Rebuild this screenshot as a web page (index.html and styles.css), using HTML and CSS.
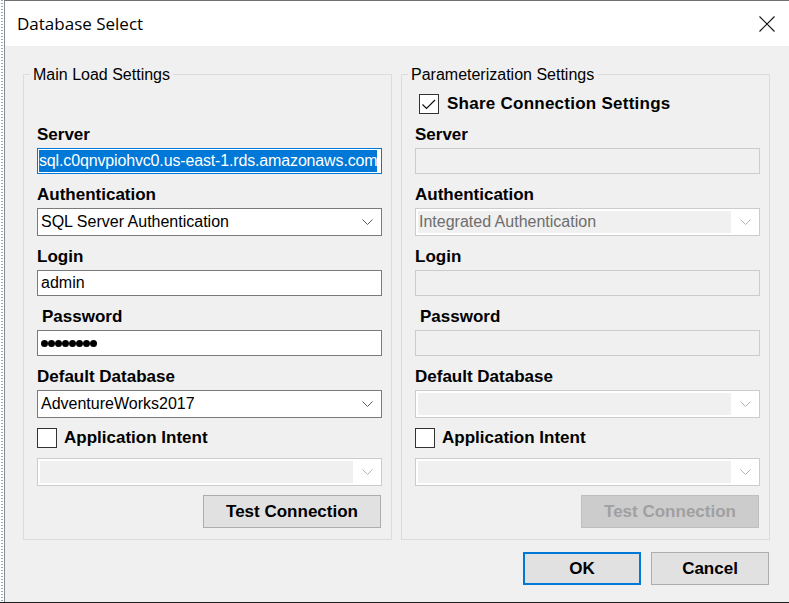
FILE: index.html
```html
<!DOCTYPE html>
<html>
<head>
<meta charset="utf-8">
<title>Database Select</title>
<link rel="stylesheet" href="styles.css">
</head>
<body>
<div class="screen">
  <div class="desk"></div>
  <div class="window">
    <div class="titlebar">
      <span class="title">Database Select</span>
      <svg class="close" width="16" height="16" viewBox="0 0 16 16"><path d="M0.5 0.5 L15.5 15.5 M15.5 0.5 L0.5 15.5" stroke="#111" stroke-width="1.1" fill="none"/></svg>
    </div>
    <div class="client">
      <div class="groups">
        <fieldset class="group">
          <legend>Main Load Settings</legend>
          <div class="group-body">
            <div class="share-row"></div>
            <div class="label">Server</div>
            <div class="input focus"><span class="sel">sql.c0qnvpiohvc0.us-east-1.rds.amazonaws.com</span></div>
            <div class="label">Authentication</div>
            <div class="select"><span class="val">SQL Server Authentication</span><span class="chev"><svg width="11" height="6" viewBox="0 0 11 6"><polyline points="0.5,0.5 5.5,5.5 10.5,0.5" fill="none" stroke="#5a5a5a" stroke-width="1"/></svg></span></div>
            <div class="label">Login</div>
            <div class="input"><span class="txt">admin</span></div>
            <div class="label indent">Password</div>
            <div class="input"><span class="dots"><i></i><i></i><i></i><i></i><i></i><i></i><i></i><i></i></span></div>
            <div class="label">Default Database</div>
            <div class="select"><span class="val">AdventureWorks2017</span><span class="chev"><svg width="11" height="6" viewBox="0 0 11 6"><polyline points="0.5,0.5 5.5,5.5 10.5,0.5" fill="none" stroke="#5a5a5a" stroke-width="1"/></svg></span></div>
            <div class="check-row"><span class="box"></span><span class="check-label">Application Intent</span></div>
            <div class="select dis"><span class="val"></span><span class="chev"><svg width="11" height="6" viewBox="0 0 11 6"><polyline points="0.5,0.5 5.5,5.5 10.5,0.5" fill="none" stroke="#b4b4b4" stroke-width="1"/></svg></span></div>
            <div class="btn-row"><button class="btn test">Test Connection</button></div>
          </div>
        </fieldset>
        <fieldset class="group">
          <legend>Parameterization Settings</legend>
          <div class="group-body">
            <div class="share-row"><span class="box"><svg width="18" height="18" viewBox="0 0 18 18"><polyline points="2.5,9.5 6.5,13.5 15,5" fill="none" stroke="#111" stroke-width="1.2"/></svg></span><span class="check-label share">Share Connection Settings</span></div>
            <div class="label">Server</div>
            <div class="input dis"></div>
            <div class="label">Authentication</div>
            <div class="select dis"><span class="val">Integrated Authentication</span><span class="chev"><svg width="11" height="6" viewBox="0 0 11 6"><polyline points="0.5,0.5 5.5,5.5 10.5,0.5" fill="none" stroke="#b4b4b4" stroke-width="1"/></svg></span></div>
            <div class="label">Login</div>
            <div class="input dis"></div>
            <div class="label indent">Password</div>
            <div class="input dis"></div>
            <div class="label">Default Database</div>
            <div class="select dis"><span class="val"></span><span class="chev"><svg width="11" height="6" viewBox="0 0 11 6"><polyline points="0.5,0.5 5.5,5.5 10.5,0.5" fill="none" stroke="#b4b4b4" stroke-width="1"/></svg></span></div>
            <div class="check-row"><span class="box"></span><span class="check-label">Application Intent</span></div>
            <div class="select dis"><span class="val"></span><span class="chev"><svg width="11" height="6" viewBox="0 0 11 6"><polyline points="0.5,0.5 5.5,5.5 10.5,0.5" fill="none" stroke="#b4b4b4" stroke-width="1"/></svg></span></div>
            <div class="btn-row"><button class="btn test dis">Test Connection</button></div>
          </div>
        </fieldset>
      </div>
      <div class="footer">
        <button class="btn ok">OK</button>
        <button class="btn cancel">Cancel</button>
      </div>
    </div>
  </div>
</div>
</body>
</html>
```

FILE: styles.css
```css
html, body {
  margin: 0;
  padding: 0;
}

body {
  width: 789px;
  height: 603px;
  overflow: hidden;
  background: #1c1c1c;
  font-family: "Liberation Sans", Arial, sans-serif;
  color: #000;
}

.screen {
  display: flex;
  height: 602px;
}

.desk {
  width: 4px;
  background: #fff linear-gradient(#86aed0 50%, transparent 50%) 1px 0 / 2px 3px repeat-y;
}

.window {
  flex: 1;
  display: flex;
  flex-direction: column;
  border-left: 1px solid #8c8c8c;
  border-top: 1px solid #6f6f6f;
  background: #f0f0f0;
}

.titlebar {
  height: 45px;
  background: #fff;
  display: flex;
  align-items: flex-start;
  justify-content: space-between;
  padding: 0 14px 0 12px;
}

.title {
  font-family: "Open Sans", "Noto Sans", sans-serif;
  font-size: 17px;
  line-height: 20px;
  margin-top: 13px;
  color: #000;
}

.close {
  margin-top: 15px;
}

.client {
  flex: 1;
  padding: 18px 19px 0 18px;
}

.groups {
  display: flex;
  gap: 9px;
}

.group {
  margin: 0;
  padding: 0;
  min-width: 0;
  width: 369px;
  height: 476px;
  box-sizing: border-box;
  border: 1px solid #dcdcdc;
}

.group legend {
  margin-left: 6px;
  padding: 2px 3px 0;
  font-size: 16px;
  line-height: 18px;
  color: #000;
}

.group-body {
  padding: 0 9px 0 13px;
}

.share-row {
  display: flex;
  align-items: center;
  height: 21px;
  margin-top: 9px;
  padding-left: 4px;
}

.label {
  font-weight: bold;
  font-size: 17px;
  line-height: 20px;
  margin-top: 10px;
  padding-top: 1px;
  height: 20px;
  box-sizing: border-box;
}

.label.indent {
  padding-left: 5px;
}

.input {
  height: 26px;
  box-sizing: border-box;
  margin-top: 4px;
  border: 1px solid #7a7a7a;
  background: #fff;
  display: flex;
  align-items: center;
  padding-left: 3px;
  font-size: 16px;
  white-space: nowrap;
  overflow: hidden;
}

.input.focus {
  border-color: #0078d7;
  padding-left: 1px;
}

.input.dis {
  border-color: #cccccc;
  background: #f0f0f0;
}

.sel {
  background: #0078d7;
  color: #fff;
  line-height: 22px;
  letter-spacing: -0.15px;
}

.dots {
  display: flex;
  gap: 0;
}

.dots i {
  width: 7px;
  height: 7px;
  border-radius: 50%;
  background: #000;
}

.select {
  height: 28px;
  box-sizing: border-box;
  margin-top: 4px;
  display: flex;
  border: 1px solid #7a7a7a;
  background: #fff;
}

.select .val {
  flex: 1;
  display: flex;
  align-items: center;
  padding-left: 3px;
  font-size: 16px;
  white-space: nowrap;
}

.chev {
  width: 28px;
  display: flex;
  align-items: center;
  justify-content: center;
}

.select.dis {
  border-color: #cccccc;
  padding: 2px 0 2px 2px;
}

.select.dis .val {
  background: #f0f0f0;
  color: #6d6d6d;
  padding-left: 1px;
}

.check-row {
  display: flex;
  align-items: center;
  height: 20px;
  margin-top: 10px;
}

.check-row + .select {
  margin-top: 10px;
}

.box {
  width: 20px;
  height: 20px;
  box-sizing: border-box;
  border: 1px solid #333;
  background: #fff;
  display: flex;
  align-items: center;
  justify-content: center;
}

.check-label {
  margin-left: 7px;
  font-weight: bold;
  font-size: 17px;
  line-height: 20px;
}

.check-label.share {
  margin-left: 8px;
  letter-spacing: 0.25px;
}

.btn-row {
  display: flex;
  justify-content: flex-end;
  margin-top: 9px;
  padding-right: 1px;
}

.btn {
  height: 33px;
  box-sizing: border-box;
  border: 1px solid #adadad;
  background: #e1e1e1;
  font-family: "Liberation Sans", Arial, sans-serif;
  font-weight: bold;
  font-size: 17px;
  color: #000;
  padding: 0;
}

.btn.test {
  width: 178px;
}

.btn.dis {
  background: #cccccc;
  border-color: #bfbfbf;
  color: #a0a0a0;
}

.footer {
  display: flex;
  justify-content: flex-end;
  gap: 10px;
  margin-top: 12px;
  padding-right: 1px;
}

.footer .btn {
  width: 118px;
}

.btn.ok {
  border: 2px solid #0078d7;
}
```
